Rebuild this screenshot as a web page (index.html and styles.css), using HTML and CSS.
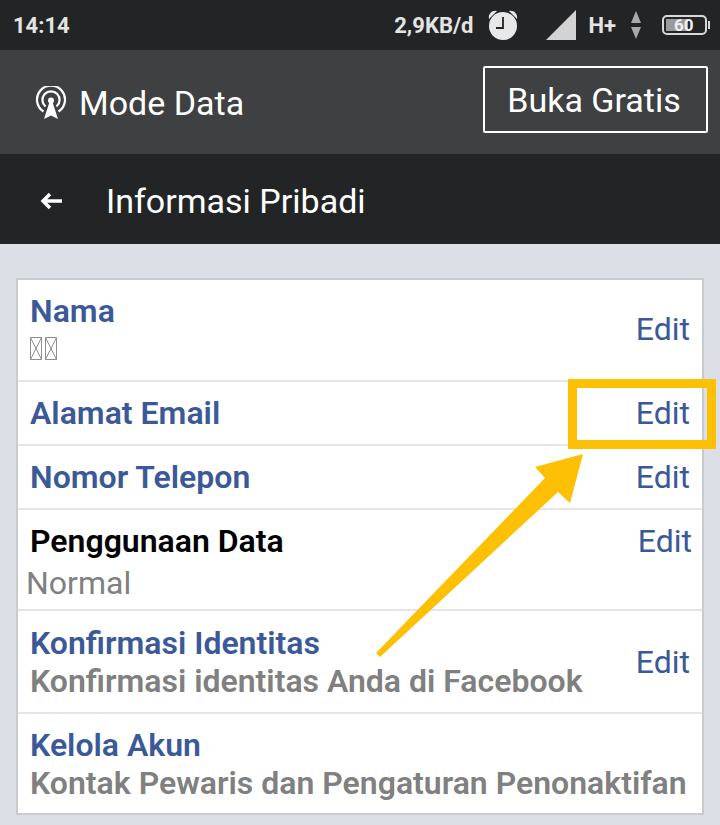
FILE: index.html
```html
<!DOCTYPE html>
<html lang="id">
<head>
    <meta charset="UTF-8">
    <meta name="viewport" content="width=device-width, initial-scale=1.0">
    <title>Informasi Pribadi</title>
    <link rel="stylesheet" href="styles.css">
</head>
<body>
    <div class="status-bar">
        <span class="time">14:14</span>
        <div class="status-right">
            <span class="speed">2,9KB/d</span>
            <svg class="alarm" width="32" height="32" viewBox="0 0 32 32">
                <path d="M2 10 C1 5 5 1 10 2 Z M30 10 C31 5 27 1 22 2 Z" fill="#e8e8e8"/>
                <circle cx="16" cy="17" r="14" fill="#e8e8e8"/>
                <path d="M16 8 V19 H9" fill="none" stroke="#232426" stroke-width="1.8"/>
            </svg>
            <svg class="signal" width="30" height="30" viewBox="0 0 30 30">
                <path d="M30 0 V30 H0 Z" fill="#d2d2d2"/>
            </svg>
            <span class="net">H+</span>
            <svg class="updown" width="10" height="30" viewBox="0 0 10 30">
                <path d="M5 1 L10 13 H0 Z" fill="#a8a9aa"/>
                <path d="M0 17 H10 L5 29 Z" fill="#a8a9aa"/>
            </svg>
            <div class="battery">
                <div class="battery-body">
                    <div class="battery-level"></div>
                    <span class="battery-text">60</span>
                </div>
                <div class="battery-tip"></div>
            </div>
        </div>
    </div>

    <div class="mode-bar">
        <div class="mode-title">
            <svg width="32" height="34" viewBox="0 0 32 34">
                <g fill="none" stroke="#fff" stroke-width="2.2">
                    <path d="M8.5 25.5 A14 14 0 1 1 23.5 25.5"/>
                    <path d="M10.5 20.5 A8.6 8.6 0 1 1 21.5 20.5"/>
                </g>
                <circle cx="16" cy="14.5" r="3" fill="#fff"/>
                <path d="M14.5 16 H17.5 L23 33 L16 29.5 L9 33 Z" fill="#fff"/>
            </svg>
            <span>Mode Data</span>
        </div>
        <button class="open-btn">Buka Gratis</button>
    </div>

    <div class="title-bar">
        <svg width="24" height="20" viewBox="0 0 24 20">
            <path d="M23 10 H4 M11 3 L4 10 L11 17" fill="none" stroke="#fff" stroke-width="3.4"/>
        </svg>
        <h1>Informasi Pribadi</h1>
    </div>

    <div class="content">
        <div class="card">
            <div class="row row-name">
                <div class="row-text">
                    <div class="row-title">Nama</div>
                    <div class="tofu">
                        <svg width="12" height="23" viewBox="0 0 12 23"><path d="M.5 .5 H11.5 V22.5 H.5 Z M.5 .5 L11.5 22.5 M11.5 .5 L.5 22.5" fill="none" stroke="#8f8f8f"/></svg>
                        <svg width="12" height="23" viewBox="0 0 12 23"><path d="M.5 .5 H11.5 V22.5 H.5 Z M.5 .5 L11.5 22.5 M11.5 .5 L.5 22.5" fill="none" stroke="#8f8f8f"/></svg>
                    </div>
                </div>
                <a class="edit">Edit</a>
            </div>
            <div class="row row-single">
                <div class="row-title">Alamat Email</div>
                <a class="edit">Edit</a>
            </div>
            <div class="row row-single">
                <div class="row-title">Nomor Telepon</div>
                <a class="edit">Edit</a>
            </div>
            <div class="row row-usage">
                <div class="row-text">
                    <div class="row-title black">Penggunaan Data</div>
                    <div class="row-normal">Normal</div>
                </div>
                <a class="edit edit-top">Edit</a>
            </div>
            <div class="row row-double">
                <div class="row-text">
                    <div class="row-title">Konfirmasi Identitas</div>
                    <div class="row-sub">Konfirmasi identitas Anda di Facebook</div>
                </div>
                <a class="edit">Edit</a>
            </div>
            <div class="row row-double row-last">
                <div class="row-text">
                    <div class="row-title">Kelola Akun</div>
                    <div class="row-sub">Kontak Pewaris dan Pengaturan Penonaktifan</div>
                </div>
            </div>
        </div>
    </div>

    <div class="highlight"></div>
    <svg class="arrow" width="220" height="225" viewBox="0 0 220 225">
        <path d="M4 215 L8 219 L186 54 L198 65 L211 16 L163 29 L173 40 Z" fill="#fdc005"/>
    </svg>
</body>
</html>
```

FILE: styles.css
```css
* {
    box-sizing: border-box;
}
body {
    position: relative;
    margin: 0;
    height: 825px;
    overflow: hidden;
    font-family: Roboto, sans-serif;
    background: #dcdfe5;
}
.status-bar {
    display: flex;
    align-items: center;
    justify-content: space-between;
    height: 50px;
    padding: 0 10px 0 13px;
    background: #232426;
    color: #e4e4e4;
    font-size: 22px;
    font-weight: 700;
}
.status-right {
    display: flex;
    align-items: center;
}
.speed {
    margin-right: 14px;
}
.alarm {
    margin-right: 27px;
}
.signal {
    margin-right: 12px;
}
.updown {
    margin: 0 21px 0 15px;
}
.battery {
    display: flex;
    align-items: center;
}
.battery-body {
    position: relative;
    width: 45px;
    height: 20px;
    border: 2px solid #d8d8d8;
    border-radius: 5px;
    padding: 2px;
}
.battery-level {
    width: 60%;
    height: 100%;
    background: #9a9a9a;
}
.battery-text {
    position: absolute;
    top: -3px;
    left: 10px;
    font-size: 17px;
    line-height: 22px;
    color: #f0f0f0;
}
.battery-tip {
    width: 2px;
    height: 8px;
    margin-left: 1px;
    background: #d8d8d8;
}
.mode-bar {
    display: flex;
    align-items: center;
    justify-content: space-between;
    height: 104px;
    padding: 0 12px 0 35px;
    background: #3f4042;
    color: #fff;
}
.mode-title {
    display: flex;
    align-items: center;
    gap: 12px;
    padding-top: 2px;
    font-size: 34px;
}
.open-btn {
    width: 225px;
    height: 67px;
    margin-bottom: 5px;
    padding: 0 3px 0 0;
    border: 2px solid #fff;
    border-radius: 2px;
    background: none;
    color: #fff;
    font-family: inherit;
    font-size: 34px;
}
.title-bar {
    display: flex;
    align-items: center;
    height: 90px;
    padding: 4px 0 0 39px;
    background: #232426;
    color: #fff;
}
.title-bar h1 {
    margin: 0 0 0 43px;
    font-size: 34px;
    font-weight: 400;
}
.content {
    padding: 34px 16px 0;
}
.card {
    height: 537px;
    border: 2px solid #c8cacd;
    background: #fff;
}
.row {
    display: flex;
    align-items: center;
    justify-content: space-between;
    padding: 0 12px 0 12px;
    border-bottom: 2px solid #e4e5e8;
}
.row-last {
    border-bottom: none;
    padding-bottom: 4px;
}
.row-name {
    align-items: flex-start;
    height: 102px;
    padding-top: 12px;
}
.row-name .edit {
    margin-top: 18px;
}
.row-single {
    height: 64px;
}
.row-usage {
    height: 101px;
    align-items: flex-start;
    padding-top: 12px;
}
.row-double {
    height: 103px;
}
.row-title {
    font-size: 32px;
    font-weight: 600;
    line-height: 38px;
    color: #3b5998;
}
.black {
    color: #000;
}
.tofu {
    display: flex;
    gap: 3px;
    margin-top: 7px;
}
.row-normal {
    margin: 4px 0 0 -4px;
    font-size: 32px;
    line-height: 38px;
    color: #808080;
}
.row-sub {
    font-size: 32px;
    font-weight: 600;
    line-height: 38px;
    color: #808080;
    white-space: nowrap;
}
.edit {
    font-size: 32px;
    line-height: 38px;
    color: #3b5998;
}
.edit-top {
    margin-right: -2px;
}
.highlight {
    position: absolute;
    left: 568px;
    top: 379px;
    width: 148px;
    height: 70px;
    border: 9px solid #fdc005;
}
.arrow {
    position: absolute;
    left: 372px;
    top: 438px;
}
```
